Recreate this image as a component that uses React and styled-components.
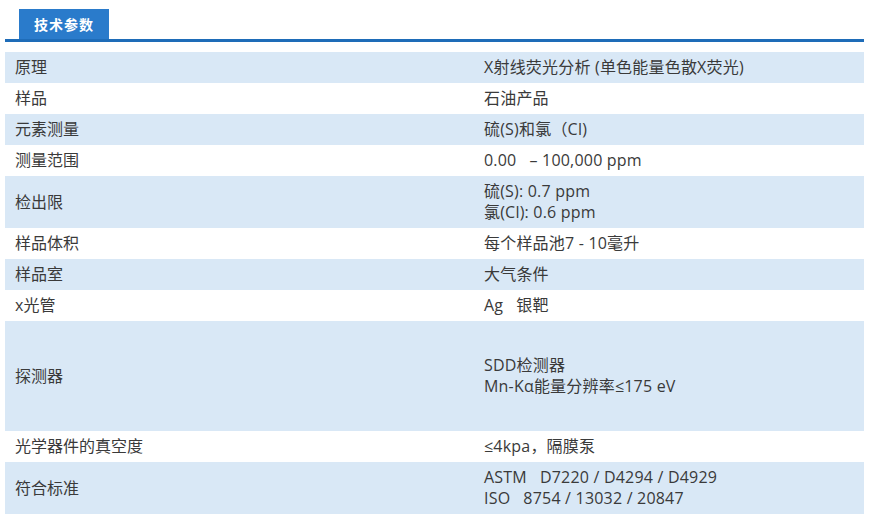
import React from "react";
import styled, { createGlobalStyle } from "styled-components";

const GlobalStyle = createGlobalStyle`
    body {
        margin: 0;
        background: #ffffff;
        font-family: "Open Sans", "Noto Sans CJK SC", sans-serif;
    }
`;

const Page = styled.div`
    padding: 9px 5px 0 5px;
    width: 859px;
`;

const TabBar = styled.div`
    display: flex;
    padding-left: 14px;
    border-bottom: 3px solid #1e6cb8;
    margin-bottom: 10px;
`;

const Tab = styled.div`
    width: 90px;
    height: 30px;
    display: flex;
    align-items: center;
    justify-content: center;
    background-color: #2a7bcb;
    color: #ffffff;
    font-family: "Noto Sans CJK SC", sans-serif;
    font-weight: 700;
    font-size: 14px;
    letter-spacing: 1px;
`;

const Table = styled.div`
    display: flex;
    flex-direction: column;
`;

const Row = styled.div`
    display: grid;
    grid-template-columns: 469px 1fr;
    align-items: center;
    min-height: ${props => props.height || 31}px;
    background-color: ${props => props.shaded ? "#d9e8f6" : "#ffffff"};
`;

const Cell = styled.div`
    padding: 5px 10px;
    font-size: 16px;
    line-height: 21px;
    color: #3a3a3a;
    white-space: pre-wrap;
    letter-spacing: ${props => props.value ? "0.2px" : "0"};
`;

const specs = [
    ["原理", ["X射线荧光分析 (单色能量色散X荧光)"]],
    ["样品", ["石油产品"]],
    ["元素测量", ["硫(S)和氯（Cl)"]],
    ["测量范围", ["0.00   – 100,000 ppm"]],
    ["检出限", ["硫(S): 0.7 ppm", "氯(Cl): 0.6 ppm"]],
    ["样品体积", ["每个样品池7 - 10毫升"]],
    ["样品室", ["大气条件"]],
    ["x光管", ["Ag   银靶"]],
    ["探测器", ["SDD检测器", "Mn-Kα能量分辨率≤175 eV"], 110],
    ["光学器件的真空度", ["≤4kpa，隔膜泵"]],
    ["符合标准", ["ASTM   D7220 / D4294 / D4929", "ISO   8754 / 13032 / 20847"]],
];

const App = () => {
    return (
        <Page>
            <GlobalStyle />
            <TabBar>
                <Tab>技术参数</Tab>
            </TabBar>
            <Table>
                {specs.map(([name, lines, height], i) => (
                    <Row key={name} shaded={i % 2 === 0} height={height}>
                        <Cell>{name}</Cell>
                        <Cell value>
                            {lines.map(line => (
                                <div key={line}>{line}</div>
                            ))}
                        </Cell>
                    </Row>
                ))}
            </Table>
        </Page>
    );
};

export default App;
